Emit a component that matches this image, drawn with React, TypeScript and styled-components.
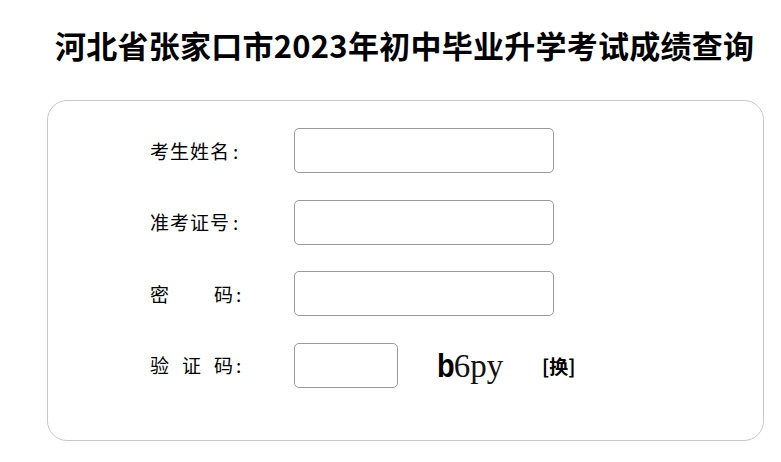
import React from "react";
import styled, { createGlobalStyle } from "styled-components";

const GlobalStyle = createGlobalStyle`
  html, body { margin: 0; padding: 0; background: #fff; }
  body { font-family: "Noto Sans CJK SC", "Noto Sans", sans-serif; color: #000; }
  * { box-sizing: border-box; }
`;

const Page = styled.div`
  width: 781px;
  height: 462px;
  overflow: hidden;
  padding: 21px 18px 0 47px;
`;

const Title = styled.h1`
  margin: 0 0 31px 8px;
  font-size: 31px;
  line-height: 48px;
  font-weight: 700;
  letter-spacing: 0.25px;
  white-space: nowrap;
  font-family: "Noto Sans CJK SC", sans-serif;
`;

const Card = styled.div`
  width: 717px;
  height: 341px;
  border: 1px solid #c8c8c8;
  border-radius: 20px;
  padding: 27px 0 0 102px;
`;

const Form = styled.div`
  display: grid;
  grid-template-columns: 144px auto;
  grid-auto-rows: 45px;
  row-gap: 26.5px;
  align-items: center;
`;

const Label = styled.div`
  display: flex;
  align-items: center;
  font-size: 19px;
  line-height: 24px;
`;

const LabelText = styled.span<{ $justify?: boolean }>`
  display: inline-block;
  width: ${(p) => (p.$justify ? "83px" : "auto")};
  letter-spacing: ${(p) => (p.$justify ? "0" : "1px")};
  text-align: ${(p) => (p.$justify ? "justify" : "left")};
  text-align-last: ${(p) => (p.$justify ? "justify" : "auto")};
`;

const Colon = styled.span`
  margin-left: 3px;
`;

const Input = styled.input<{ $w: number }>`
  width: ${(p) => p.$w}px;
  height: 45px;
  border: 1px solid #9a9a9a;
  border-radius: 5px;
  background: #fff;
  outline: none;
  padding: 0 8px;
  font-size: 16px;
`;

const CaptchaRow = styled.div`
  display: flex;
  align-items: center;
`;

const Captcha = styled.div`
  margin-left: 39px;
  width: 75px;
  height: 40px;
  display: flex;
  align-items: baseline;
  padding-top: 2px;
  user-select: none;
`;

const CapBold = styled.span`
  font-family: "Liberation Sans", Arial, sans-serif;
  font-weight: 700;
  font-size: 34px;
  line-height: 36px;
  letter-spacing: -1px;
  display: inline-block;
  transform: scaleX(0.85);
  transform-origin: left center;
  margin-right: -3px;
`;

const CapSerif = styled.span`
  font-family: "Liberation Serif", "Times New Roman", serif;
  font-size: 33px;
  line-height: 36px;
  color: #111;
`;

const Refresh = styled.span`
  margin-left: 30px;
  font-size: 19px;
  font-weight: 700;
  cursor: pointer;
`;

export default function App() {
  return (
    <>
      <GlobalStyle />
      <Page>
        <Title>河北省张家口市2023年初中毕业升学考试成绩查询</Title>
        <Card>
          <Form>
            <Label>
              <LabelText>考生姓名</LabelText>
              <Colon>:</Colon>
            </Label>
            <Input $w={260} type="text" />
            <Label>
              <LabelText>准考证号</LabelText>
              <Colon>:</Colon>
            </Label>
            <Input $w={260} type="text" />
            <Label>
              <LabelText $justify>密 码</LabelText>
              <Colon>:</Colon>
            </Label>
            <Input $w={260} type="password" />
            <Label>
              <LabelText $justify>验 证 码</LabelText>
              <Colon>:</Colon>
            </Label>
            <CaptchaRow>
              <Input $w={104} type="text" />
              <Captcha>
                <CapBold>b</CapBold>
                <CapSerif>6py</CapSerif>
              </Captcha>
              <Refresh>[换]</Refresh>
            </CaptchaRow>
          </Form>
        </Card>
      </Page>
    </>
  );
}
